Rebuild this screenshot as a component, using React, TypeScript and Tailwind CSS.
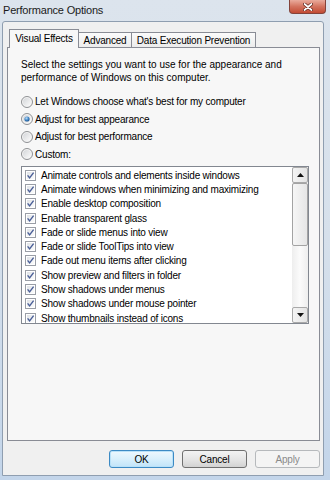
import React from "react";

const effects = [
  "Animate controls and elements inside windows",
  "Animate windows when minimizing and maximizing",
  "Enable desktop composition",
  "Enable transparent glass",
  "Fade or slide menus into view",
  "Fade or slide ToolTips into view",
  "Fade out menu items after clicking",
  "Show preview and filters in folder",
  "Show shadows under menus",
  "Show shadows under mouse pointer",
  "Show thumbnails instead of icons",
];

const choices = [
  { label: "Let Windows choose what's best for my computer", on: false },
  { label: "Adjust for best appearance", on: true },
  { label: "Adjust for best performance", on: false },
  { label: "Custom:", on: false },
];

function Radio({ on }: { on: boolean }) {
  return (
    <svg width="12" height="12" viewBox="0 0 12 12" className="shrink-0">
      <defs>
        <linearGradient id="rbg" x1="0" y1="0" x2="1" y2="1">
          <stop offset="0" stopColor="#d4d6d9" />
          <stop offset="1" stopColor="#fbfbfb" />
        </linearGradient>
        <radialGradient id="rdot" cx="0.4" cy="0.35" r="0.7">
          <stop offset="0" stopColor="#b9defa" />
          <stop offset="0.6" stopColor="#3b7fc0" />
          <stop offset="1" stopColor="#1b4f85" />
        </radialGradient>
      </defs>
      <circle cx="6" cy="6" r="5.5" fill="#f4f4f4" stroke="#8e9093" />
      <circle cx="6" cy="6" r="4" fill="url(#rbg)" />
      {on ? <circle cx="6" cy="6" r="2.6" fill="url(#rdot)" /> : null}
    </svg>
  );
}

function Check() {
  return (
    <svg width="11" height="11" viewBox="0 0 11 11" className="shrink-0">
      <defs>
        <linearGradient id="cbg" x1="0" y1="0" x2="1" y2="1">
          <stop offset="0" stopColor="#dfe2e6" />
          <stop offset="1" stopColor="#fcfcfc" />
        </linearGradient>
      </defs>
      <rect x="0.5" y="0.5" width="10" height="10" fill="#fff" stroke="#9a9ea6" />
      <rect x="2" y="2" width="7" height="7" fill="url(#cbg)" />
      <path d="M2.6 5.4 L4.6 7.9 L8.6 2.6" fill="none" stroke="#4a5f97" strokeWidth="1.4" />
    </svg>
  );
}

function Arrow({ up }: { up?: boolean }) {
  return (
    <svg width="7" height="4" viewBox="0 0 7 4">
      <path d={up ? "M0 4 L3.5 0 L7 4 Z" : "M0 0 L7 0 L3.5 4 Z"} fill="#111" />
    </svg>
  );
}

function Btn({ label, kind }: { label: string; kind: "default" | "normal" | "disabled" }) {
  return (
    <div
      className={
        kind === "default"
          ? "flex h-[18px] w-[65px] items-center justify-center rounded-[3px] border border-[#3c8ac4] bg-gradient-to-b from-[#eef8fe] via-[#d9f0fc] to-[#c1e4f9] shadow-[0_0_0_1px_#b9e1f8_inset]"
          : kind === "normal"
            ? "flex h-[18px] w-[65px] items-center justify-center rounded-[3px] border border-[#707070] bg-gradient-to-b from-[#f3f3f3] via-[#e6e6e6] to-[#d2d2d2]"
            : "flex h-[18px] w-[65px] items-center justify-center rounded-[3px] border border-[#b6b9bc] bg-[#f4f4f4] text-[#8a8a8a]"
      }
    >
      {label}
    </div>
  );
}

export default function App() {
  return (
    <div className="h-[480px] w-[330px] overflow-hidden bg-gradient-to-b from-[#dce4ed] via-[#d6e0eb] to-[#c3d5ea] text-[10px] tracking-[-0.2px] text-black font-['Liberation_Sans',Arial,sans-serif]">
      <div className="flex h-[21px] items-start justify-between pl-[3px] pr-[4px]">
        <div className="pt-[4px] text-[11px] leading-[13px] text-[#1a1a1a]">Performance Options</div>
        <div className="flex h-[14px] w-[37px] items-center justify-center rounded-b-[4px] border border-t-0 border-[#83433a] bg-gradient-to-b from-[#e9ab9c] via-[#d3735f] to-[#c24a33]">
          <svg width="10" height="8" viewBox="0 0 10 8">
            <path d="M1.5 1 L8.5 7 M8.5 1 L1.5 7" stroke="#5b231b" strokeWidth="3.2" strokeLinecap="round" />
            <path d="M1.5 1 L8.5 7 M8.5 1 L1.5 7" stroke="#ffffff" strokeWidth="1.7" strokeLinecap="round" />
          </svg>
        </div>
      </div>

      <div className="ml-[2px] flex h-[455px] w-[322px] flex-col rounded-t-[3px] border border-[#8f9eb0] bg-[#f0f0f0] pb-[7px] pl-[4px] pr-[3px] pt-[7px]">
        <div className="relative z-10 flex h-[18px] items-end pl-[2px]">
          <div className="-mb-px flex h-[19px] w-[70px] items-center justify-center border border-b-0 border-[#898c95] bg-[#f7f7f7] pb-[1px]">
            Visual Effects
          </div>
          <div className="flex h-[15px] w-[52px] items-center justify-center border-t border-[#898c95] bg-gradient-to-b from-[#fbfbfb] to-[#ececec]">
            Advanced
          </div>
          <div className="flex h-[15px] w-[125px] items-center justify-center border border-b-0 border-[#898c95] bg-gradient-to-b from-[#fbfbfb] to-[#ececec]">
            Data Execution Prevention
          </div>
        </div>

        <div className="flex h-[394px] flex-col border border-[#898c95] bg-[#f7f7f7] pl-[13px] pt-[11px]">
          <p className="whitespace-nowrap leading-[12.5px] tracking-normal">
            Select the settings you want to use for the appearance and
            <br />
            performance of Windows on this computer.
          </p>

          <div className="mt-[9px] flex flex-col">
            {choices.map((c) => (
              <div key={c.label} className="flex h-[17.5px] items-center gap-[2px]">
                <Radio on={c.on} />
                <span className="whitespace-nowrap">{c.label}</span>
              </div>
            ))}
          </div>

          <div className="mt-[3px] flex h-[158px] w-[288px] border border-[#828790] bg-white">
            <div className="flex flex-1 flex-col overflow-hidden pt-[1px]">
              {effects.map((e) => (
                <div key={e} className="flex h-[14.3px] shrink-0 items-center gap-[5px] pl-[3px]">
                  <Check />
                  <span className="whitespace-nowrap">{e}</span>
                </div>
              ))}
            </div>
            <div className="flex w-[16px] flex-col bg-[#f1f1f1]">
              <div className="flex h-[16px] items-center justify-center rounded-[2px] border border-[#a9a9a9] bg-gradient-to-r from-[#f4f4f4] to-[#e4e4e4]">
                <Arrow up />
              </div>
              <div className="h-[63px] rounded-[2px] border border-[#a3a3a3] bg-gradient-to-r from-[#f6f6f6] to-[#e6e6e6]" />
              <div className="flex-1 bg-gradient-to-r from-[#eeeeee] via-[#fbfbfb] to-[#eeeeee]" />
              <div className="flex h-[16px] items-center justify-center rounded-[2px] border border-[#a9a9a9] bg-gradient-to-r from-[#f4f4f4] to-[#e4e4e4]">
                <Arrow />
              </div>
            </div>
          </div>
        </div>

        <div className="mt-[9px] flex justify-end gap-[8px]">
          <Btn label="OK" kind="default" />
          <Btn label="Cancel" kind="normal" />
          <Btn label="Apply" kind="disabled" />
        </div>
      </div>
    </div>
  );
}
